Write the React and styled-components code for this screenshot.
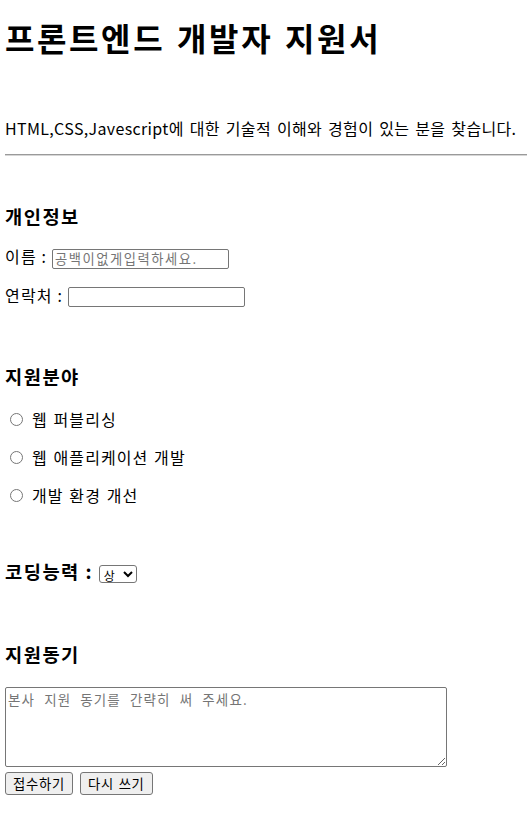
import React from 'react';
import styled, { createGlobalStyle } from 'styled-components';

const GlobalStyle = createGlobalStyle`
  html, body {
    margin: 0;
    padding: 0;
    background: #ffffff;
  }
  body {
    font-family: "Noto Sans CJK KR", "Noto Sans", sans-serif;
    color: #000000;
    overflow: hidden;
  }
`;

const Page = styled.form`
  padding: 0 0 0 5px;
  display: flex;
  flex-direction: column;
  align-items: flex-start;
`;

const Title = styled.h1`
  margin: 18px 0 0;
  font-size: 32px;
  line-height: 38px;
  font-weight: 700;
  letter-spacing: 2.6px;
  word-spacing: 2px;
`;

const Intro = styled.p`
  margin: 62px 0 0;
  font-size: 16px;
  line-height: 20px;
  letter-spacing: 0.35px;
  word-spacing: 2px;
  white-space: nowrap;
`;

const Divider = styled.hr`
  align-self: stretch;
  margin: 16px 0 0;
  border: 0;
  border-top: 1px solid #9a9a9a;
  border-bottom: 1px solid #d6d6d6;
  height: 0;
`;

const SectionTitle = styled.h3`
  margin: ${p => p.gap}px 0 0;
  font-size: 18.7px;
  line-height: 22px;
  font-weight: 700;
  letter-spacing: 1.5px;
  white-space: pre;
`;

const Field = styled.p`
  margin: ${p => p.gap}px 0 0;
  font-size: 16px;
  line-height: 24px;
  letter-spacing: 1.2px;
  white-space: pre;
`;

const TextInput = styled.input`
  box-sizing: border-box;
  width: 177px;
  height: 20px;
  margin: 0;
  padding: 1px 2px;
  vertical-align: middle;
  border: 1px solid #767676;
  border-radius: 2px;
  font-family: "Noto Sans CJK KR", sans-serif;
  font-size: 13.3px;
  &::placeholder {
    color: #757575;
    letter-spacing: 1.5px;
  }
`;

const Choice = styled.label`
  margin: ${p => p.gap}px 0 0;
  font-size: 16px;
  line-height: 22px;
  display: flex;
  align-items: center;
  letter-spacing: 1.1px;
  word-spacing: 1px;
`;

const Radio = styled.input`
  width: 13px;
  height: 13px;
  margin: 1px 9px 0 5px;
`;

const Select = styled.select`
  height: 18px;
  width: 38px;
  padding: 0;
  margin: 0;
  vertical-align: middle;
  font-family: "Noto Sans CJK KR", sans-serif;
  font-size: 12px;
  font-weight: 400;
  letter-spacing: 0;
  border: 1px solid #767676;
  border-radius: 3px;
  background: #ffffff;
`;

const Motive = styled.textarea`
  box-sizing: border-box;
  margin: 22px 0 0;
  width: 442px;
  height: 80px;
  padding: 2px 2px;
  border: 1px solid #767676;
  border-radius: 2px;
  font-family: "Noto Sans CJK KR", sans-serif;
  font-size: 13.5px;
  line-height: 18px;
  &::placeholder {
    color: #757575;
    word-spacing: 5px;
    letter-spacing: 1.1px;
  }
`;

const Actions = styled.div`
  margin: 5px 0 0;
  display: flex;
  gap: 7px;
`;

const Button = styled.button`
  box-sizing: border-box;
  height: 23px;
  padding: 0 7px;
  background: #efefef;
  border: 1px solid #767676;
  border-radius: 3px;
  font-family: "Noto Sans CJK KR", sans-serif;
  font-size: 13.3px;
  line-height: 20px;
  letter-spacing: 0.75px;
  word-spacing: 1px;
  color: #000000;
`;

const fields = ['웹 퍼블리싱', '웹 애플리케이션 개발', '개발 환경 개선'];

export default function App() {
  return (
    <>
      <GlobalStyle />
      <Page onSubmit={e => e.preventDefault()}>
        <Title>프론트엔드 개발자 지원서</Title>
        <Intro>HTML,CSS,Javescript에 대한 기술적 이해와 경험이 있는 분을 찾습니다.</Intro>
        <Divider />

        <SectionTitle gap={49}>개인정보</SectionTitle>
        <Field gap={17}>
          {'이름 : '}<TextInput type="text" placeholder="공백이없게입력하세요." />
        </Field>
        <Field gap={14}>
          {'연락처 : '}<TextInput type="text" />
        </Field>

        <SectionTitle gap={58}>지원분야</SectionTitle>
        {fields.map((f, i) => (
          <Choice key={f} gap={i === 0 ? 21 : 16}>
            <Radio type="radio" name="field" value={f} />
            {f}
          </Choice>
        ))}

        <SectionTitle gap={54}>
          {'코딩능력 : '}
          <Select defaultValue="상">
            <option>상</option>
            <option>중</option>
            <option>하</option>
          </Select>
        </SectionTitle>

        <SectionTitle gap={60}>지원동기</SectionTitle>
        <Motive placeholder="본사 지원 동기를 간략히 써 주세요." />
        <Actions>
          <Button type="submit">접수하기</Button>
          <Button type="reset">다시 쓰기</Button>
        </Actions>
      </Page>
    </>
  );
}
